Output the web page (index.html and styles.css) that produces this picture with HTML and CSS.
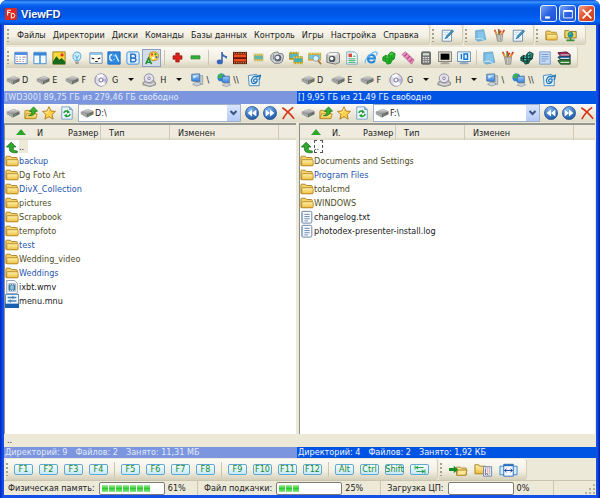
FILE: index.html
```html
<!DOCTYPE html>
<html lang="ru">
<head>
<meta charset="utf-8">
<title>ViewFD</title>
<link rel="stylesheet" href="styles.css">
</head>
<body>
<svg class="defs" aria-hidden="true">
<defs>
<linearGradient id="gFolder" x1="0" y1="0" x2="0" y2="1"><stop offset="0" stop-color="#fff3ae"/><stop offset="1" stop-color="#efbd3f"/></linearGradient>
<linearGradient id="gBlue" x1="0" y1="0" x2="0" y2="1"><stop offset="0" stop-color="#9fd0ff"/><stop offset="1" stop-color="#2f7de0"/></linearGradient>
<radialGradient id="gBall" cx=".4" cy=".25" r=".8"><stop offset="0" stop-color="#7fb8f2"/><stop offset="1" stop-color="#14509f"/></radialGradient>
<linearGradient id="gDrive" x1="0" y1="0" x2="0" y2="1"><stop offset="0" stop-color="#dcdcdc"/><stop offset="1" stop-color="#888"/></linearGradient>
</defs>
<symbol id="i-folder" viewBox="0 0 16 16"><path d="M1 13V3.500Q1 2.500 2 2.500H6L7.500 4H13Q14 4 14 5V13Z" fill="#f5d36a" stroke="#a87a1c"/><path d="M2 13.500V7.500Q2 6.500 3 6.500H14Q15 6.500 15 7.500V12.500Q15 13.500 14 13.500Z" fill="url(#gFolder)" stroke="#b58727"/></symbol>
<symbol id="i-folderup" viewBox="0 0 16 16"><path d="M1 14V6Q1 5 2 5H5L6 6H13V14Z" fill="#f5d36a" stroke="#b08a20"/><path d="M1 14.500L3 9H15L13.500 14.500Z" fill="url(#gFolder)" stroke="#b08a20"/><path d="M5 11Q9 11 9 6H6L11 1L15.500 6H12.500Q12.500 12 5 11Z" fill="#35b52b" stroke="#176d14" stroke-width=".8"/></symbol>
<symbol id="i-star" viewBox="0 0 16 16"><path d="M8 .8L10.200 5.700L15.400 6.200L11.500 9.700L12.700 15L8 12.200L3.300 15L4.500 9.700L.6 6.200L5.800 5.700Z" fill="#ffd24a" stroke="#b0761c"/><path d="M8 3L6.500 7L3 7.500" fill="none" stroke="#fff3b8"/></symbol>
<symbol id="i-refresh" viewBox="0 0 16 16"><path d="M2 1H11L14 4V15H2Z" fill="#eaf5ff" stroke="#6f9cc4"/><path d="M11 1V4H14" fill="#9fc6e8" stroke="#6f9cc4"/><path d="M4.500 8Q5 5 9 6M11.500 9Q11 12.500 7 11.500" fill="none" stroke="#1f9a2c" stroke-width="1.700"/><path d="M8 4L11.500 7L8 8.500ZM8 9L4.500 10.500L7.500 13.500Z" fill="#1f9a2c"/></symbol>
<symbol id="i-drive" viewBox="0 0 16 16"><path d="M1 6.500L9 3.500L15.500 6V9.500L8 13L1 9Z" fill="#6c6c6c"/><path d="M1 6.500L9 3.500L15.500 6L8 9.500Z" fill="url(#gDrive)"/><path d="M1 6.500L8 9.500V13L1 9.500Z" fill="#a5a5a5"/><path d="M9.500 10.500L11 10" stroke="#55d355"/></symbol>
<symbol id="i-cd" viewBox="0 0 16 16"><circle cx="8" cy="8" r="7" fill="#dedcec" stroke="#76748e"/><path d="M8 8L3 3Q8-.5 11 2.500ZM8 8L13 13Q9 16 5 13.500Z" fill="#f9f9ff"/><path d="M8 8L14.500 6L14 10.500Z" fill="#b9b0e4"/><circle cx="8" cy="8" r="2.300" fill="#fff" stroke="#66607f"/></symbol>
<symbol id="i-cddrive" viewBox="0 0 16 16"><path d="M1 11L5 8H13L15.500 11V13.500L9 15.500L1 13.500Z" fill="#b5b5b5" stroke="#777" stroke-width=".8"/><ellipse cx="8" cy="6" rx="5.500" ry="5" fill="#e4e2ee" stroke="#85839a"/><circle cx="8" cy="6" r="1.500" fill="#fff" stroke="#77758a"/><path d="M3 12L9 13.500L14 12" fill="none" stroke="#eee"/></symbol>
<symbol id="i-pc" viewBox="0 0 16 16"><path d="M2 1.500L11 1V10L2 9Z" fill="url(#gBlue)" stroke="#466d9d"/><path d="M3.500 3L9.500 2.500L4 6.500Z" fill="#d2ebff"/><path d="M11.500 3H14.500V13H11.500Z" fill="#c5cbd3" stroke="#828991" stroke-width=".7"/><path d="M3 13L6 10.500H10L12.500 13L8 15Z" fill="#ccd2d8" stroke="#7f8791" stroke-width=".7"/></symbol>
<symbol id="i-net" viewBox="0 0 16 16"><circle cx="5" cy="5" r="4.500" fill="#2d82dc"/><path d="M2 2Q5-.5 7 1.500L6 5L3 6.500L1 5ZM6 7L8 7L6 9.300Z" fill="#3db548"/><path d="M6 4L14 3.500V11.500L6 10.500Z" fill="url(#gBlue)" stroke="#466d9d"/><path d="M6 14L8.500 11.500H13L15.500 13.500L11 15.500Z" fill="#ccd2d8" stroke="#7f8791" stroke-width=".7"/></symbol>
<symbol id="i-mail" viewBox="0 0 16 16"><path d="M1.500 3L11 1.500L14 5V14.500H2.500Z" fill="#e5f4ff" stroke="#3f82b9"/><path d="M13.500 4Q7 2 5 8Q5 13 9 12Q12 11 11.500 7Q8 6 7.500 9Q8 11 11 10M10 5L15.500 2.500L14 8" fill="none" stroke="#2575b7" stroke-width="1.400"/></symbol>
<symbol id="i-up" viewBox="0 0 16 16"><path d="M1.500 8L7 2.500L12.500 8H9.500V10.500Q10 12.500 14 12.500V14.500Q5 15.500 5 10V8Z" fill="#30a82c" stroke="#136615" stroke-width=".8"/></symbol>
<symbol id="i-back" viewBox="0 0 16 16"><circle cx="8" cy="8" r="7.500" fill="url(#gBall)" stroke="#24508a" stroke-width=".8"/><path d="M8 4V12L3 8ZM13 4V12L8 8Z" fill="#fff"/></symbol>
<symbol id="i-fwd" viewBox="0 0 16 16"><circle cx="8" cy="8" r="7.500" fill="url(#gBall)" stroke="#24508a" stroke-width=".8"/><path d="M8 4V12L13 8ZM3 4V12L8 8Z" fill="#fff"/></symbol>
<symbol id="i-x" viewBox="0 0 16 16"><path d="M1.500 2Q8 6 15 14.500M14 1.500Q7 6 2 15" fill="none" stroke="#d63316" stroke-width="1.800"/></symbol>
<symbol id="i-list" viewBox="0 0 16 16"><path d="M1 1.500H15V14.500H1Z" fill="#fff" stroke="#3a76c4"/><path d="M1 2H15V4.500H1Z" fill="#4a8be2"/><path d="M2.500 7H13.500M2.500 9.500H13.500M2.500 12H13.500" stroke="#8a9fc0" stroke-dasharray="2 1.500"/><path d="M11 7H13M3 12H5" stroke="#e06a4a"/></symbol>
<symbol id="i-panes" viewBox="0 0 16 16"><path d="M1 1.500H15V14.500H1Z" fill="#f2f9ff" stroke="#3a86d4"/><path d="M1 2H15V5H1ZM7.200 2H8.800V14H7.200Z" fill="#3a86d4"/></symbol>
<symbol id="i-image" viewBox="0 0 16 16"><path d="M1 1H15V15H1Z" fill="#ffd83c" stroke="#8c7a18"/><path d="M1 12L5 6L8.500 10L11 8L15 12V15H1Z" fill="#176a1d"/><circle cx="11.500" cy="4.500" r="1.900" fill="#e3381d"/></symbol>
<symbol id="i-bulb" viewBox="0 0 16 16"><path d="M5.500 11Q2.500 8 3.500 4.500Q5 1 8 1Q12 1 12.500 5Q12.500 8 10.500 11Z" fill="#c7ecff" stroke="#55a6cf"/><path d="M6 12H10V14Q8 16 6 14Z" fill="#9a9a8c"/><path d="M6 5L8 8L10 5M8 8V11" fill="none" stroke="#459bc6"/></symbol>
<symbol id="i-eyes" viewBox="0 0 16 16"><path d="M1 2H15V14H1Z" fill="#fffef5" stroke="#6684a5"/><path d="M1 2H15V4.500H1Z" fill="#8dc3e8"/><path d="M3 8L6 9M10 9L13 8M7 12H10" stroke="#222" stroke-width="1.400"/></symbol>
<symbol id="i-cmd" viewBox="0 0 16 16"><path d="M1 1H15V15H1Z" fill="#2d8ae4" stroke="#1a62b1"/><path d="M6 4Q3 4 3 7.500T6 11M8 5V6M8 9V10M9.500 4L13.500 12" fill="none" stroke="#e8f6ff" stroke-width="1.500"/></symbol>
<symbol id="i-bold" viewBox="0 0 16 16"><rect x="1" y="1" width="14" height="14" rx="2" fill="#ddf0ff" stroke="#2f84d3"/><path d="M5.500 3.500V12.500H9Q11.500 12 11.500 10Q11.500 8.500 9.500 8Q11 7.500 11 6Q11 3.500 8.500 3.500ZM6 8H9" fill="none" stroke="#1f66c0" stroke-width="1.500"/></symbol>
<symbol id="i-palette" viewBox="0 0 16 16"><path d="M5 7Q4 1 10 1Q15.500 1 15.500 6Q15 11 10 11Q8 12 6 9Z" fill="#ffd94a" stroke="#b08c1b"/><circle cx="8" cy="4" r="1.300" fill="#e5452b"/><circle cx="12" cy="3.800" r="1.300" fill="#2e9b37"/><circle cx="13" cy="7" r="1.300" fill="#3b6fd6"/><circle cx="9.500" cy="8" r="1.300" fill="#fff"/><path d="M1 15L4 8L7.500 15M2 13H6" fill="none" stroke="#168d29" stroke-width="1.700"/></symbol>
<symbol id="i-plus" viewBox="0 0 16 16"><path d="M5.500 1.500H10.500V5.500H14.500V10.500H10.500V14.500H5.500V10.500H1.500V5.500H5.500Z" fill="#dc201a" stroke="#8e1110"/></symbol>
<symbol id="i-minus" viewBox="0 0 16 16"><path d="M1.500 5.500H14.500V10H1.500Z" fill="#31b33a" stroke="#1e7a27"/></symbol>
<symbol id="i-note" viewBox="0 0 16 16"><path d="M8 1V12" stroke="#24478e" stroke-width="1.500"/><path d="M8 1Q9 5 14 6L13 9Q11 6 8 6Z" fill="#3b66b8"/><ellipse cx="5.500" cy="12.500" rx="3.500" ry="2.700" fill="#3866be"/></symbol>
<symbol id="i-film" viewBox="0 0 16 16"><path d="M0 1H16V15H0Z" fill="#5b170a"/><path d="M1 4H15V7H1ZM1 9H15V12H1Z" fill="#ef4b1e"/><path d="M1 2.500H15M1 13.500H15" stroke="#fdb94a" stroke-dasharray="1.500 1"/></symbol>
<symbol id="i-strip" viewBox="0 0 16 16"><path d="M1 2.500H15V13.500H1Z" fill="#c8b457"/><path d="M2 5.500H14V10.500H2Z" fill="#60b6ad"/><path d="M1 4H15M1 12H15" stroke="#fff2b4" stroke-dasharray="1.500 1.500"/></symbol>
<symbol id="i-webcam" viewBox="0 0 16 16"><path d="M1 5L4 2L9 1L10 3L14 3L15.500 6L14 12L11 14L5 14L1 10Z" fill="#d3d5d8" stroke="#6e7379"/><circle cx="9" cy="8" r="4" fill="#58636f"/><circle cx="8.500" cy="7.500" r="2.200" fill="#eef4fb"/><path d="M4 4V10" stroke="#888" stroke-width="1.500"/></symbol>
<symbol id="i-strips" viewBox="0 0 16 16"><path d="M0 1H11V10H0Z" fill="#ad972c"/><path d="M1 3.500H10V8H1Z" fill="#52b9cc"/><path d="M5 6H16V15H5Z" fill="#b9a133"/><path d="M6 8.500H15V12.500H6Z" fill="#43b2b6"/><path d="M0 2H11M5 7.200H16M5 14H16" stroke="#fff2a4" stroke-dasharray="1.500 1.500"/></symbol>
<symbol id="i-stripzoom" viewBox="0 0 16 16"><path d="M0 2H15V11H0Z" fill="#c7aa3e"/><path d="M1 4.500H14V9H1Z" fill="#70c8e0"/><path d="M0 3H15" stroke="#fff2a4" stroke-dasharray="1.500 1.500"/><circle cx="9" cy="8.500" r="3.300" fill="#dcf4ff" stroke="#7f91a2"/><path d="M11.500 11L15 15" stroke="#b2743d" stroke-width="2"/></symbol>
<symbol id="i-camera" viewBox="0 0 16 16"><path d="M1 4L4 2H14L15.500 4V13L11 15L1 13Z" fill="#cfcfcd" stroke="#6c6c6c"/><path d="M1 4L4 2H14L11 5Z" fill="#f3f3f3"/><circle cx="7" cy="9" r="3.700" fill="#4e565c"/><circle cx="6.500" cy="8.500" r="2" fill="#f5f8fb"/></symbol>
<symbol id="i-doc" viewBox="0 0 16 16"><path d="M2 1H11L14 4V15H2Z" fill="#effaff" stroke="#6da1b7"/><path d="M4 3H8V7H4Z" fill="#de463a"/><path d="M4 9H12M4 11H12M4 13H12M9 6H12" stroke="#31a454"/></symbol>
<symbol id="i-ie" viewBox="0 0 16 16"><path d="M12.500 10.500Q11 13.500 8 13Q4.500 12.500 4.500 8.500Q4.500 4.500 8.500 4.500Q12.500 4.500 12.500 8.500H5" fill="none" stroke="#2889dc" stroke-width="2.400"/><path d="M2 14Q-.5 11 6 5T15 2Q15.500 3 14 5" fill="none" stroke="#65b9f2" stroke-width="1.300"/></symbol>
<symbol id="i-cubes" viewBox="0 0 16 16"><path d="M1 7L4 5L7 6L8 3L11 1L15 3L14 9L11 11L10 14L6 15L4 12L1 11Z" fill="#25b42b" stroke="#128617"/><path d="M4 5V11M8 4V14M11 2V10M1 8.500H14M4 11.500H11" stroke="#138f19" stroke-width=".7"/><path d="M9 4L12 3M5 7H7" stroke="#8bea81"/></symbol>
<symbol id="i-cubesdark" viewBox="0 0 16 16"><path d="M1 7L4 5L7 6L8 3L11 1L15 3L14 9L11 11L10 14L6 15L4 12L1 11Z" fill="#1e7c6d" stroke="#123a33"/><path d="M4 5V11M8 4V14M11 2V10M1 8.500H14M4 11.500H11" stroke="#0f332c"/><path d="M9 4L12 3M5 7H7M9 7H11M5 10H7" stroke="#7feedd"/></symbol>
<symbol id="i-candy" viewBox="0 0 16 16"><path d="M1 4L5 1L15 10L12 15Z" fill="#e88fbc" stroke="#c6689a"/><path d="M4 6L7 3M7 9L10 6M10 12L13 9" stroke="#a54880" stroke-width="1.300"/></symbol>
<symbol id="i-calc" viewBox="0 0 16 16"><rect x="3" y="1" width="10" height="14" rx="1" fill="#777" stroke="#555"/><path d="M4.500 2.500H11.500V5H4.500Z" fill="#cfe3cf"/><path d="M4.500 7.500H11.500M4.500 10H11.500M4.500 12.500H11.500" stroke="#eee" stroke-width="1.400" stroke-dasharray="1.700 1"/></symbol>
<symbol id="i-monitor" viewBox="0 0 16 16"><path d="M.5 1H15.500V12H.5Z" fill="#dedccc" stroke="#77756a"/><path d="M3 3H13V10H3Z" fill="#000"/><path d="M5 12H11V13H13V15H3V13H5Z" fill="#aaa79a"/></symbol>
<symbol id="i-screen" viewBox="0 0 16 16"><path d="M.5 1H15.500V12H.5Z" fill="#e8f6ff" stroke="#5c87b1"/><path d="M5 3.500V9.500M8 3.500H12V9.500H8Z" fill="none" stroke="#1875d8" stroke-width="1.600"/><path d="M5 12H11V13H13V15H3V13H5Z" fill="#8fa7bd"/></symbol>
<symbol id="i-notepad" viewBox="0 0 16 16"><path d="M2 2L12 1L14.500 13L5 15L2 13Z" fill="#76b8df" stroke="#6ba5c8"/><path d="M4 4L12 3L13 12L5 13Z" fill="#86c6ea"/><path d="M2 12Q8 10 13 14" fill="none" stroke="#d9edf8"/></symbol>
<symbol id="i-pencils" viewBox="0 0 16 16"><path d="M5 8L2 1M8 8L7 0M10 8L14 1M7 7L10 2" stroke="#d44126" stroke-width="2"/><path d="M3 3L5 8M12 4L10 8" stroke="#edab23" stroke-width="1.500"/><path d="M7 1V7" stroke="#3e9a42" stroke-width="1.300"/><path d="M4 7H12L11 15H5.500Z" fill="#c4ced1" stroke="#8b8c83"/><path d="M6 8V14M9 8V14" stroke="#b38d76"/></symbol>
<symbol id="i-edit" viewBox="0 0 16 16"><path d="M1.500 1.500H13V15H1.500Z" fill="#f3faff" stroke="#5e7e96"/><path d="M3 4H9M3 7H6M4 12H11" stroke="#add3e9"/><path d="M5 12L7 8L14 1L15.500 3L8.500 10Z" fill="#3f93c5" stroke="#27658e" stroke-width=".7"/></symbol>
<symbol id="i-textdoc" viewBox="0 0 16 16"><path d="M2 1H14V15H2Z" fill="#c8dcf5" stroke="#6f91c1"/><path d="M4 4H12M4 6.500H12M4 9H12M4 11.500H9" stroke="#6592cf"/></symbol>
<symbol id="i-books" viewBox="0 0 16 16"><path d="M1 2L11 1L15 4V6H4Z" fill="#9c2758" stroke="#541130"/><path d="M1 7L4 6H15V10H4Z" fill="#2e6dac" stroke="#18334d"/><path d="M1 11L4 10H15V15H4Z" fill="#37863a" stroke="#193b18"/><path d="M4 4.500H14M4 8.500H14M4 13H14" stroke="#fff"/></symbol>
<symbol id="i-netfolder" viewBox="0 0 16 16"><path d="M1 2H6L7 3H15V11H1Z" fill="#f6d75e" stroke="#7b6b1c"/><circle cx="8" cy="7" r="3.500" fill="#278ca7"/><path d="M6 5L9 4L8 7L6 8Z" fill="#46c650"/><path d="M8 11V15M3 14H13" stroke="#3c8d36" stroke-width="2"/></symbol>
<symbol id="i-video" viewBox="0 0 16 16"><path d="M2 .5H11L14 3.500V15.500H2Z" fill="#fbfcff" stroke="#8294ac"/><path d="M4 4H12V13H4Z" fill="#477596"/><path d="M6 6H10V11H6Z" fill="#8ec4dd"/><path d="M4 5H12M4 12H12" stroke="#fff" stroke-dasharray="1 1"/></symbol>
<symbol id="i-menufile" viewBox="0 0 16 16"><path d="M.5 .5H15.500V15.500H.5Z" fill="#f0f8ff" stroke="#3f79b5"/><path d="M0 11H16V16H0Z" fill="#1a5eb4"/><path d="M3 4H13M3 8H13" stroke="#407faf" stroke-width="1.500"/><path d="M9 2V6M6 6V10" stroke="#407faf"/></symbol>
<symbol id="i-text" viewBox="0 0 16 16"><rect x="2" y="1.500" width="11.500" height="13.500" rx="1.500" fill="#f7faff" stroke="#647795"/><path d="M5 5H11M5 7.500H11M5 10H11M5 12.500H9" stroke="#607ca8"/><path d="M2.500 3V14" stroke="#9db2cf" stroke-width="2"/></symbol>
<symbol id="i-goto" viewBox="0 0 20 14"><path d="M8 12V4H12L13 5H18V12.500Z" fill="url(#gFolder)" stroke="#a98022"/><path d="M9 7H19L17.500 12.500H8Z" fill="#ffe794" stroke="#a98022"/><path d="M0 5H5V2.500L9.500 6.500L5 10.500V8H0Z" fill="#188d23"/></symbol>
<symbol id="i-copyto" viewBox="0 0 20 14"><path d="M1 11V1.500H5L6 3H12V11Z" fill="url(#gFolder)" stroke="#a98022"/><path d="M10 3.500H18.500V13.500H10Z" fill="#e7f1ff" stroke="#7187a8"/><path d="M12 5H17M12 7H17M12 9H17M12 11H17" stroke="#c3655d" stroke-dasharray="1 1"/><path d="M12 6V12L13.500 10.500L15 13" fill="#fff" stroke="#557" stroke-width=".8"/></symbol>
<symbol id="i-swap" viewBox="0 0 20 14"><path d="M1 3H19V12H1Z" fill="#d5eafb" stroke="#3688cf"/><path d="M5 1H15V13.500H5Z" fill="#f6fbff" stroke="#306cbc"/><path d="M5 2H15" stroke="#306cbc" stroke-width="2"/><path d="M6 7.500H14M8 5.500L6 7.500L8 9.500M12 5.500L14 7.500L12 9.500" fill="none" stroke="#1b3aa0"/></symbol>
<symbol id="i-tab" viewBox="0 0 14 10"><path d="M1.500 .5V5M2 2.800H11M5 1L2.500 2.800L5 4.600M12.500 5V9.500M3 7.200H12M9 5.400L11.500 7.200L9 9" fill="none" stroke="#1d9b35"/></symbol>
<symbol id="i-app" viewBox="0 0 16 16"><rect width="16" height="16" rx="1" fill="#dc2b21"/><path d="M3.500 10V3H8M3.500 6H7M8.500 7V13.500Q13 13.500 13 10T8.500 7" fill="none" stroke="#fff" stroke-width="1.300"/></symbol>
</svg>

<div class="window">
<header class="titlebar">
  <svg class="app-icon"><use href="#i-app"/></svg>
  <h1>ViewFD</h1>
  <button class="cap" aria-label="Свернуть"><svg viewBox="0 0 16 16"><path d="M3.500 12H9" stroke="#fff" stroke-width="2.500"/></svg></button>
  <button class="cap" aria-label="Развернуть"><svg viewBox="0 0 16 16"><path d="M3 4.500H13V12.500H3Z" fill="none" stroke="#fff"/><path d="M3 4.500H13" stroke="#fff" stroke-width="2"/></svg></button>
  <button class="cap close" aria-label="Закрыть"><svg viewBox="0 0 16 16"><path d="M3 3L13 13M13 3L3 13" stroke="#fff" stroke-width="2"/></svg></button>
</header>

<div class="client">
<div class="menu-row">
  <nav class="band menu">
    <button>Файлы</button><button>Директории</button><button>Диски</button><button>Команды</button><button>Базы данных</button><button>Контроль</button><button>Игры</button><button>Настройка</button><button>Справка</button>
  </nav>
  <div class="band mini"><button aria-label="Правка"><svg><use href="#i-edit"/></svg></button></div>
  <div class="band mini"><button aria-label="Блокнот"><svg><use href="#i-notepad"/></svg></button><button aria-label="Рисунок"><svg><use href="#i-pencils"/></svg></button><button aria-label="Редактор"><svg><use href="#i-edit"/></svg></button></div>
  <div class="band mini"><button aria-label="Папка"><svg><use href="#i-folder"/></svg></button><button aria-label="Сетевая папка"><svg><use href="#i-netfolder"/></svg></button></div>
</div>

<div class="band tools">
  <button aria-label="Список"><svg><use href="#i-list"/></svg></button><button aria-label="Панели"><svg><use href="#i-panes"/></svg></button><button aria-label="Эскизы"><svg><use href="#i-image"/></svg></button><button aria-label="Подсказка"><svg><use href="#i-bulb"/></svg></button><button aria-label="Просмотр"><svg><use href="#i-eyes"/></svg></button><button aria-label="Консоль"><svg><use href="#i-cmd"/></svg></button><button aria-label="Жирный"><svg><use href="#i-bold"/></svg></button><button class="pressed" aria-label="Цвета"><svg><use href="#i-palette"/></svg></button>
  <i class="sep"></i>
  <button aria-label="Добавить"><svg class="small"><use href="#i-plus"/></svg></button><button aria-label="Убрать"><svg class="small"><use href="#i-minus"/></svg></button>
  <i class="sep"></i>
  <button aria-label="Музыка"><svg><use href="#i-note"/></svg></button><button aria-label="Фильм"><svg><use href="#i-film"/></svg></button><button aria-label="Кадры"><svg class="small"><use href="#i-strip"/></svg></button><button aria-label="Веб-камера"><svg><use href="#i-webcam"/></svg></button><button aria-label="Плёнки"><svg><use href="#i-strips"/></svg></button><button aria-label="Поиск кадра"><svg><use href="#i-stripzoom"/></svg></button><button aria-label="Камера"><svg><use href="#i-camera"/></svg></button><button aria-label="Документ"><svg><use href="#i-doc"/></svg></button><button aria-label="Интернет"><svg><use href="#i-ie"/></svg></button><button aria-label="Реестр"><svg><use href="#i-cubes"/></svg></button><button aria-label="Архив"><svg><use href="#i-candy"/></svg></button><button aria-label="Калькулятор"><svg><use href="#i-calc"/></svg></button><button aria-label="Терминал"><svg><use href="#i-monitor"/></svg></button><button aria-label="Экран"><svg><use href="#i-screen"/></svg></button>
  <i class="sep"></i>
  <button aria-label="Заметки"><svg><use href="#i-notepad"/></svg></button><button aria-label="Карандаши"><svg><use href="#i-pencils"/></svg></button><button aria-label="Кубы"><svg><use href="#i-cubesdark"/></svg></button><button aria-label="Текст"><svg><use href="#i-textdoc"/></svg></button><button aria-label="Книги"><svg><use href="#i-books"/></svg></button>
</div>

<main class="panels">
<section class="panel">
  <div class="drives">
    <button><svg><use href="#i-drive"/></svg>D</button><button><svg><use href="#i-drive"/></svg>E</button><button><svg><use href="#i-drive"/></svg>F</button><button class="drop"><svg><use href="#i-cd"/></svg>G</button><button class="drop"><svg><use href="#i-cddrive"/></svg>H</button><button><svg><use href="#i-pc"/></svg>\</button><button><svg><use href="#i-net"/></svg>\\</button><button aria-label="Почта"><svg><use href="#i-mail"/></svg></button>
  </div>
  <p class="info">[WD300] 89,75 ГБ из 279,46 ГБ свободно</p>
  <div class="path">
    <button aria-label="Диск"><svg><use href="#i-drive"/></svg></button><button aria-label="Вверх"><svg><use href="#i-folderup"/></svg></button><button aria-label="Избранное"><svg><use href="#i-star"/></svg></button><button aria-label="Обновить"><svg><use href="#i-refresh"/></svg></button>
    <span class="combo"><svg class="combo-icon"><use href="#i-drive"/></svg><select aria-label="Путь"><option>D:\</option></select><svg class="combo-arrow" viewBox="0 0 13 15"><path d="M3.500 5.500L6.500 8.500L9.500 5.500" fill="none" stroke="#3c5580" stroke-width="2"/></svg></span>
    <button aria-label="Назад"><svg><use href="#i-back"/></svg></button><button aria-label="Вперёд"><svg><use href="#i-fwd"/></svg></button><button aria-label="Закрыть панель"><svg><use href="#i-x"/></svg></button>
  </div>
  <div class="list">
  <table>
    <thead><tr><th class="c-name"><svg class="tri" viewBox="0 0 10 6"><path d="M0 6L5 0L10 6Z" fill="#2ca52c"/></svg>И</th><th class="c-size">Размер</th><th class="c-type">Тип</th><th class="c-date">Изменен</th><th></th></tr></thead>
    <tbody>
    <tr><td colspan="5"><svg><use href="#i-up"/></svg><span class="updir">..</span></td></tr>
    <tr class="blue"><td colspan="5"><svg><use href="#i-folder"/></svg>backup</td></tr>
    <tr class="olive"><td colspan="5"><svg><use href="#i-folder"/></svg>Dg Foto Art</td></tr>
    <tr class="blue"><td colspan="5"><svg><use href="#i-folder"/></svg>DivX_Collection</td></tr>
    <tr class="olive"><td colspan="5"><svg><use href="#i-folder"/></svg>pictures</td></tr>
    <tr class="olive"><td colspan="5"><svg><use href="#i-folder"/></svg>Scrapbook</td></tr>
    <tr class="olive"><td colspan="5"><svg><use href="#i-folder"/></svg>tempfoto</td></tr>
    <tr class="blue"><td colspan="5"><svg><use href="#i-folder"/></svg>test</td></tr>
    <tr class="olive"><td colspan="5"><svg><use href="#i-folder"/></svg>Wedding_video</td></tr>
    <tr class="blue"><td colspan="5"><svg><use href="#i-folder"/></svg>Weddings</td></tr>
    <tr><td colspan="5"><svg><use href="#i-video"/></svg>ixbt.wmv</td></tr>
    <tr><td colspan="5"><svg><use href="#i-menufile"/></svg>menu.mnu</td></tr>
    </tbody>
  </table>
  </div>
  <p class="current">..</p>
  <p class="info"><span>Директорий: 9</span><span>Файлов: 2</span><span>Занято: 11,31 МБ</span></p>
</section>

<section class="panel active">
  <div class="drives">
    <button><svg><use href="#i-drive"/></svg>D</button><button><svg><use href="#i-drive"/></svg>E</button><button><svg><use href="#i-drive"/></svg>F</button><button class="drop"><svg><use href="#i-cd"/></svg>G</button><button class="drop"><svg><use href="#i-cddrive"/></svg>H</button><button><svg><use href="#i-pc"/></svg>\</button><button><svg><use href="#i-net"/></svg>\\</button><button aria-label="Почта"><svg><use href="#i-mail"/></svg></button>
  </div>
  <p class="info">[] 9,95 ГБ из 21,49 ГБ свободно</p>
  <div class="path">
    <button aria-label="Диск"><svg><use href="#i-drive"/></svg></button><button aria-label="Вверх"><svg><use href="#i-folderup"/></svg></button><button aria-label="Избранное"><svg><use href="#i-star"/></svg></button><button aria-label="Обновить"><svg><use href="#i-refresh"/></svg></button>
    <span class="combo"><svg class="combo-icon"><use href="#i-drive"/></svg><select aria-label="Путь"><option>F:\</option></select><svg class="combo-arrow" viewBox="0 0 13 15"><path d="M3.500 5.500L6.500 8.500L9.500 5.500" fill="none" stroke="#3c5580" stroke-width="2"/></svg></span>
    <button aria-label="Назад"><svg><use href="#i-back"/></svg></button><button aria-label="Вперёд"><svg><use href="#i-fwd"/></svg></button><button aria-label="Закрыть панель"><svg><use href="#i-x"/></svg></button>
  </div>
  <div class="list">
  <table>
    <thead><tr><th class="c-name"><svg class="tri" viewBox="0 0 10 6"><path d="M0 6L5 0L10 6Z" fill="#2ca52c"/></svg>И.</th><th class="c-size">Размер</th><th class="c-type">Тип</th><th class="c-date">Изменен</th><th></th></tr></thead>
    <tbody>
    <tr><td colspan="5"><svg><use href="#i-up"/></svg><span class="updir">..</span></td></tr>
    <tr class="olive"><td colspan="5"><svg><use href="#i-folder"/></svg>Documents and Settings</td></tr>
    <tr class="blue"><td colspan="5"><svg><use href="#i-folder"/></svg>Program Files</td></tr>
    <tr class="olive"><td colspan="5"><svg><use href="#i-folder"/></svg>totalcmd</td></tr>
    <tr class="olive"><td colspan="5"><svg><use href="#i-folder"/></svg>WINDOWS</td></tr>
    <tr><td colspan="5"><svg><use href="#i-text"/></svg>changelog.txt</td></tr>
    <tr><td colspan="5"><svg><use href="#i-text"/></svg>photodex-presenter-install.log</td></tr>
    </tbody>
  </table>
  </div>
  <p class="current"></p>
  <p class="info"><span>Директорий: 4</span><span>Файлов: 2</span><span>Занято: 1,92 КБ</span></p>
</section>
</main>

<div class="keys-row">
  <div class="band keys">
    <button>F1</button><button>F2</button><button>F3</button><button>F4</button><i class="sep"></i><button>F5</button><button>F6</button><button>F7</button><button>F8</button><i class="sep"></i><button>F9</button><button>F10</button><button>F11</button><button>F12</button><i class="sep"></i><button>Alt</button><button>Ctrl</button><button>Shift</button><button aria-label="Tab"><svg><use href="#i-tab"/></svg></button>
  </div>
  <div class="band go">
    <button aria-label="Перейти"><svg><use href="#i-goto"/></svg></button><button aria-label="Копировать"><svg><use href="#i-copyto"/></svg></button><button aria-label="Обмен"><svg><use href="#i-swap"/></svg></button>
  </div>
</div>

<footer class="status">
  <div class="cell"><span>Физическая память:</span><span class="meter" role="progressbar" aria-label="Физическая память" aria-valuenow="61"><i></i><i></i><i></i><i></i><i></i><i></i><i></i></span><span>61%</span></div>
  <div class="cell"><span>Файл подкачки:</span><span class="meter" role="progressbar" aria-label="Файл подкачки" aria-valuenow="25"><i></i><i></i><i></i></span><span>25%</span></div>
  <div class="cell"><span>Загрузка ЦП:</span><span class="meter" role="progressbar" aria-label="Загрузка ЦП" aria-valuenow="0"></span><span>0%</span></div>
  <svg class="grip" viewBox="0 0 12 12"><path d="M9 1H11V3H9ZM5 5H7V7H5ZM9 5H11V7H9ZM1 9H3V11H1ZM5 9H7V11H5ZM9 9H11V11H9Z" fill="#b5b19c"/></svg>
</footer>
</div>
</div>
</body>
</html>
```
FILE: styles.css
```css
* { box-sizing: border-box; }
body {
  margin: 0;
  background: #fff;
  color: #222;
  font: 9px/14px "DejaVu Sans Condensed", "Noto Sans", sans-serif;
}
.defs { position: absolute; width: 0; height: 0; }
button {
  display: flex;
  align-items: center;
  justify-content: center;
  margin: 0;
  padding: 0;
  border: 0;
  background: none;
  color: inherit;
  font: inherit;
  white-space: nowrap;
}
svg { display: block; flex: none; width: 14px; height: 14px; }
p { margin: 0; }

.window {
  display: flex;
  flex-direction: column;
  min-height: 100vh;
  padding: 0 4px 3px;
  border-radius: 7px 7px 0 0;
  background: linear-gradient(90deg, #0024c4, #1550e8 3px, #1550e8 calc(100% - 3px), #0018a8);
}
.titlebar {
  display: flex;
  align-items: center;
  gap: 2px;
  height: 25px;
  margin: 0 -4px;
  padding: 2px 5px 0;
  border-radius: 7px 7px 0 0;
  background: linear-gradient(#0a4fd0, #3d95ff 2px, #0a63ef 5px, #0054e3 9px, #0058ea 15px, #0367fb 21px, #0242c4);
}
.app-icon { width: 12px; height: 12px; }
.titlebar h1 {
  flex: 1;
  margin: 0 0 0 2px;
  color: #fff;
  font: bold 11px/14px "Liberation Sans", sans-serif;
  text-shadow: 1px 1px 1px #0a2a88;
}
.cap {
  width: 17px;
  height: 17px;
  border: 1px solid #e4edff;
  border-radius: 3px;
  background: linear-gradient(135deg, #7ea6f5, #2a63e3 50%, #1f52d2);
}
.cap.close { background: linear-gradient(135deg, #f0a088, #e0502c 50%, #c93a16); }

.client { display: flex; flex: 1; flex-direction: column; background: #ece9d8; }
.menu-row, .keys-row { display: flex; gap: 1px; padding-left: 2px; }
.band {
  display: flex;
  align-items: center;
  height: 20px;
  border-right: 1px solid #d3ceb6;
  border-radius: 0 3px 3px 0;
  background: linear-gradient(#fbfaf5, #f1eee1 60%, #d3cfb8);
}
.band::before {
  content: "";
  flex: none;
  width: 2px;
  height: 13px;
  margin: 0 1px;
  background: repeating-linear-gradient(#a5a08a 0 2px, transparent 2px 4px);
}
.menu { gap: 7px; padding-right: 10px; }
.mini { gap: 6px; padding-right: 8px; }
.mini svg { width: 13px; height: 13px; }
.tools { height: 21px; margin: 2px 18px 0 2px; padding-right: 4px; }
.tools::before { margin-right: 3px; }
.tools button { flex: 1; height: 18px; border: 1px solid transparent; }
.tools button.pressed { border-color: #8f9fc4; background: #d4dbe9; }
.tools .small { width: 11px; height: 11px; }
.sep { flex: none; width: 1px; height: 15px; margin: 0 3px; background: #cbc6b0; }

.panels { display: flex; flex: 1; }
.panel { display: flex; flex: 293 1 0; flex-direction: column; min-width: 0; }
.panel.active { flex-grow: 299; }
.drives { display: flex; align-items: center; height: 23px; padding: 0 2px; gap: 8px; }
.drives button { gap: 2px; }
.drives .drop { gap: 4px; }
.drives .drop::after {
  content: "";
  margin-left: 6px;
  border: 3px solid transparent;
  border-top-color: #111;
  border-bottom-width: 0;
}
.info {
  display: flex;
  gap: 8px;
  height: 13px;
  padding-left: 1px;
  overflow: hidden;
  background: #7b96df;
  color: #e2e9fa;
  line-height: 12px;
  white-space: nowrap;
}
.active .info { background: #0054e3; color: #f0f5ff; }
.path {
  display: flex;
  align-items: center;
  gap: 4px;
  height: 18px;
  padding: 0 2px;
  background: linear-gradient(#fbfaf5, #e0dcc8);
}
.active .drives, .active .path { padding-left: 4px; }
.combo { position: relative; display: flex; flex: 1; height: 18px; }
.combo select {
  width: 100%;
  padding: 0 0 0 16px;
  border: 1px solid #9fb2cc;
  border-radius: 0;
  background: #fff;
  color: #222;
  font: inherit;
  appearance: none;
}
.combo-icon { position: absolute; left: 2px; top: 2px; }
.combo-arrow {
  position: absolute;
  right: 1px;
  top: 1px;
  width: 13px;
  height: 16px;
  background: linear-gradient(#dbe6fd, #b4c9f6);
}

.list {
  flex: 1;
  margin: 1px 1px 0 0;
  border-top: 2px solid #969992;
  border-left: 1px solid #8a8d88;
  background: #fff;
}
.active .list { margin-left: 2px; }
table { width: 100%; border-collapse: collapse; table-layout: fixed; }
th {
  height: 15px;
  padding: 0;
  background: linear-gradient(#efecdf 80%, #d9d5c2);
  font-weight: normal;
  text-align: left;
  white-space: nowrap;
}
th svg.tri { display: inline-block; width: 10px; height: 6px; margin: 0 11px 1px; }
th:not(:first-child):not(:last-child) { box-shadow: inset -1px 0 #cfcab5; }
.c-name { width: 63px; }
.c-size { width: 33px; }
.c-type { width: 69px; padding-left: 8px; }
.c-date { width: 109px; padding-left: 8px; }
td { height: 14px; padding: 0; line-height: 14px; white-space: nowrap; }
td svg { float: left; }
.blue { color: #1f55b0; }
.olive { color: #4f4d1d; }
.updir { display: inline-block; width: 9px; height: 13px; background: #ece9d8; }
.active .updir { outline: 1px dashed #555; outline-offset: -1px; background: none; }
.current { height: 13px; padding-left: 3px; line-height: 12px; }
.current + .info { height: 11px; line-height: 11px; }

.keys-row { margin-top: 1px; }
.keys-row .band { height: 21px; }
.keys { gap: 6px; padding-right: 8px; }
.keys::before { margin: 0; }
.keys button {
  width: 19px;
  height: 11px;
  border: 1px solid #5fa8d0;
  border-radius: 2px;
  background: linear-gradient(#f4fcff, #c8e8fa);
  color: #178a2c;
  line-height: 9px;
}
.keys button svg { width: 14px; height: 9px; }
.keys .sep { margin: 0; }
.go { gap: 6px; padding-right: 8px; }
.go svg { width: 19px; height: 14px; }

.status { display: flex; height: 15px; border-top: 1px solid #c9c5b0; }
.cell {
  display: flex;
  flex: 182 1 0;
  align-items: center;
  gap: 3px;
  padding-left: 6px;
  border-right: 1px solid #cbc7b3;
  white-space: nowrap;
}
.cell:first-child { flex-grow: 195; padding-left: 4px; }
.cell:nth-child(3) { flex-grow: 171; }
.meter {
  display: flex;
  gap: 1px;
  width: 66px;
  height: 13px;
  margin-left: 1px;
  padding: 2px;
  border: 1px solid #7d7c73;
  border-radius: 2px;
  background: #fff;
}
.meter i { width: 6px; background: linear-gradient(#a9eea4, #2fc932 50%, #8fe68a); }
.grip { width: 12px; height: 12px; margin: 2px 0 0 30px; }
```
